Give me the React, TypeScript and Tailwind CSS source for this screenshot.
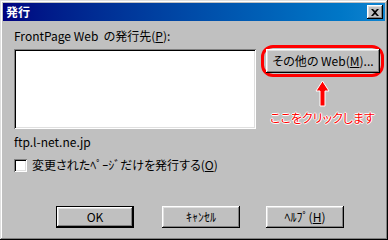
const raised =
  "bg-[#c0c0c0] shadow-[inset_-1px_-1px_#000,inset_1px_1px_#fff,inset_-2px_-2px_#808080,inset_2px_2px_#dfdfdf]";
const sunken =
  "shadow-[inset_1px_1px_#808080,inset_-1px_-1px_#fff,inset_2px_2px_#000,inset_-2px_-2px_#dfdfdf]";

function Button({ children, width, isDefault }: { children: React.ReactNode; width: string; isDefault?: boolean }) {
  return (
    <div className={`${width} h-[22px] ${isDefault ? "border border-black" : ""} flex`}>
      <div className={`flex-1 flex items-center justify-center ${raised}`}>{children}</div>
    </div>
  );
}

export default function App() {
  return (
    <div
      className="w-[388px] h-[240px] bg-[#c0c0c0] p-[3px] flex flex-col text-[12px] leading-[14px] text-black shadow-[inset_-1px_-1px_#000,inset_1px_1px_#dfdfdf,inset_-2px_-2px_#808080,inset_2px_2px_#fff] [font-feature-settings:'palt']"
      style={{ fontFamily: '"Noto Sans CJK JP", sans-serif' }}
    >
      {/* title bar */}
      <div className="h-[18px] flex items-center justify-between pl-[3px] pr-[2px] bg-gradient-to-r from-[#000080] to-[#1084d0]">
        <span className="text-white font-bold">発行</span>
        <div className={`w-[16px] h-[14px] flex items-center justify-center ${raised}`}>
          <svg width="8" height="7" viewBox="0 0 8 7">
            <path d="M0 0h2l2 2 2-2h2L5 3.5 8 7H6L4 5 2 7H0l3-3.5z" fill="#000" />
          </svg>
        </div>
      </div>

      <div className="flex-1 flex flex-col pl-[11px]">
        <div className="mt-[8px]">
          FrontPage Web&nbsp; の発行先(<span className="underline">P</span>):
        </div>

        <div className="flex mt-[6px]">
          <div className={`w-[242px] h-[80px] bg-white ${sunken}`} />
          <div className="ml-[5px] -mt-[4px] flex flex-col items-center">
            <div className="border-[3px] border-[#ff0000] rounded-[12px] pl-[2px] pr-[1px] py-[1px]">
              <Button width="w-[114px] h-[24px]">
                その他の&nbsp;Web(<span className="underline">M</span>)...
              </Button>
            </div>
            <svg width="15" height="27" viewBox="0 0 15 27" className="mt-[3px]">
              <path d="M7.5 1 L14 11 H10 V26 H5 V11 H1 Z" fill="#ff0000" stroke="#fff" strokeWidth="1" />
            </svg>
            <div className="mt-[4px] text-[#ff0000] [text-shadow:1px_0_#fff,-1px_0_#fff,0_1px_#fff,0_-1px_#fff]">
              ここをクリックします
            </div>
          </div>
        </div>

        <div className="mt-[6px]">ftp.l-net.ne.jp</div>

        <div className="flex items-center mt-[9px]">
          <div className={`w-[13px] h-[13px] bg-white ${sunken}`} />
          <span className="ml-[5px]">
            変更されたﾍﾟｰｼﾞだけを発行する(<span className="underline">O</span>)
          </span>
        </div>

        <div className="flex mt-[34px] pl-[42px]">
          <Button width="w-[78px]" isDefault>
            OK
          </Button>
          <div className="w-[28px]" />
          <Button width="w-[78px]">ｷｬﾝｾﾙ</Button>
          <div className="w-[26px]" />
          <Button width="w-[78px]">
            ﾍﾙﾌﾟ(<span className="underline">H</span>)
          </Button>
        </div>
      </div>
    </div>
  );
}
